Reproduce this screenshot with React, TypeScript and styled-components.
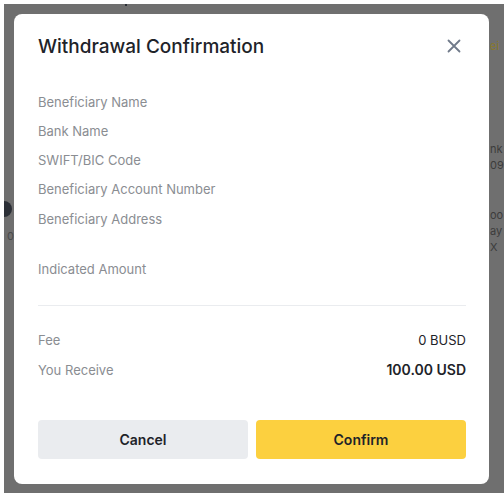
import React from "react";
import styled, { createGlobalStyle } from "styled-components";

const Global = createGlobalStyle`
  html, body { margin: 0; padding: 0; background: #ffffff; }
  body { font-family: Inter, "Open Sans", "Liberation Sans", sans-serif; -webkit-font-smoothing: antialiased; }
  * { box-sizing: border-box; }
`;

const Page = styled.div`
  width: 504px;
  height: 500px;
  padding: 4px 0 0 4px;
  background: #ffffff;
`;

const Backdrop = styled.div`
  position: relative;
  width: 500px;
  height: 489px;
  background: #6f6f6f;
  padding: 10px 0 0 10px;
  overflow: hidden;
`;

const Peek = styled.span<{ $x: number; $y: number; $color?: string }>`
  position: absolute;
  left: ${(p) => p.$x}px;
  top: ${(p) => p.$y}px;
  font-size: 11px;
  line-height: 14px;
  color: ${(p) => p.$color || "#3c3c3c"};
  white-space: nowrap;
`;

const Dot = styled.span`
  position: absolute;
  left: -8px;
  top: 197px;
  width: 16px;
  height: 16px;
  border-radius: 50%;
  background: #2b2f36;
`;

const Tick = styled.span`
  position: absolute;
  left: 121px;
  top: -4px;
  width: 2px;
  height: 6px;
  background: #2b2f36;
`;

const Modal = styled.div`
  position: relative;
  width: 475px;
  height: 470px;
  background: #ffffff;
  border-radius: 8px;
  padding: 0 23px 0 24px;
  display: flex;
  flex-direction: column;
`;

const Header = styled.div`
  display: flex;
  align-items: center;
  justify-content: space-between;
  height: 64px;
`;

const Title = styled.h2`
  margin: 0;
  font-size: 19px;
  font-weight: 500;
  color: #1e2329;
`;

const Close = styled.button`
  border: none;
  background: none;
  padding: 0;
  width: 24px;
  height: 24px;
  display: flex;
  align-items: center;
  justify-content: center;
  color: #707a8a;
  cursor: pointer;
`;

const Details = styled.div`
  display: flex;
  flex-direction: column;
  padding-top: 15px;
`;

const Row = styled.div<{ $h?: number }>`
  display: flex;
  justify-content: space-between;
  align-items: flex-start;
  height: ${(p) => p.$h || 29}px;
  line-height: 18px;
`;

const Label = styled.span`
  font-size: 13px;
  color: #8a8d92;
`;

const Value = styled.span<{ $strong?: boolean }>`
  font-size: ${(p) => (p.$strong ? 14 : 13)}px;
  font-weight: ${(p) => (p.$strong ? 600 : 400)};
  color: #1e2329;
`;

const Divider = styled.div`
  height: 1px;
  background: #eaecef;
  margin: 27px 0 25px;
`;

const Actions = styled.div`
  display: grid;
  grid-template-columns: 1fr 1fr;
  gap: 8px;
  margin-top: 29px;
`;

const Button = styled.button<{ $primary?: boolean }>`
  height: 39px;
  border: none;
  border-radius: 4px;
  font-family: inherit;
  font-size: 14px;
  font-weight: 600;
  color: #1e2329;
  background: ${(p) => (p.$primary ? "#fcd03f" : "#eaecef")};
  cursor: pointer;
`;

export default function App() {
  return (
    <>
      <Global />
      <Page>
        <Backdrop>
          <Tick />
          <Dot />
          <Peek $x={3} $y={225} $color="#4a4a4a">0</Peek>
          <Peek $x={486} $y={35} $color="#8a7a2a">ei</Peek>
          <Peek $x={486} $y={138}>nk</Peek>
          <Peek $x={486} $y={154}>09</Peek>
          <Peek $x={486} $y={204}>oo</Peek>
          <Peek $x={486} $y={220}>ay</Peek>
          <Peek $x={486} $y={236}>X</Peek>
          <Modal role="dialog" aria-label="Withdrawal Confirmation">
            <Header>
              <Title>Withdrawal Confirmation</Title>
              <Close aria-label="Close">
                <svg width="14" height="14" viewBox="0 0 14 14" fill="none">
                  <path d="M1.5 1.5L12.5 12.5M12.5 1.5L1.5 12.5" stroke="currentColor" strokeWidth="1.8" strokeLinecap="round" />
                </svg>
              </Close>
            </Header>
            <Details>
              <Row><Label>Beneficiary Name</Label></Row>
              <Row><Label>Bank Name</Label></Row>
              <Row><Label>SWIFT/BIC Code</Label></Row>
              <Row $h={30}><Label>Beneficiary Account Number</Label></Row>
              <Row $h={50}><Label>Beneficiary Address</Label></Row>
              <Row $h={18}><Label>Indicated Amount</Label></Row>
            </Details>
            <Divider />
            <Row $h={30}>
              <Label>Fee</Label>
              <Value>0 BUSD</Value>
            </Row>
            <Row $h={30}>
              <Label>You Receive</Label>
              <Value $strong>100.00 USD</Value>
            </Row>
            <Actions>
              <Button>Cancel</Button>
              <Button $primary>Confirm</Button>
            </Actions>
          </Modal>
        </Backdrop>
      </Page>
    </>
  );
}
